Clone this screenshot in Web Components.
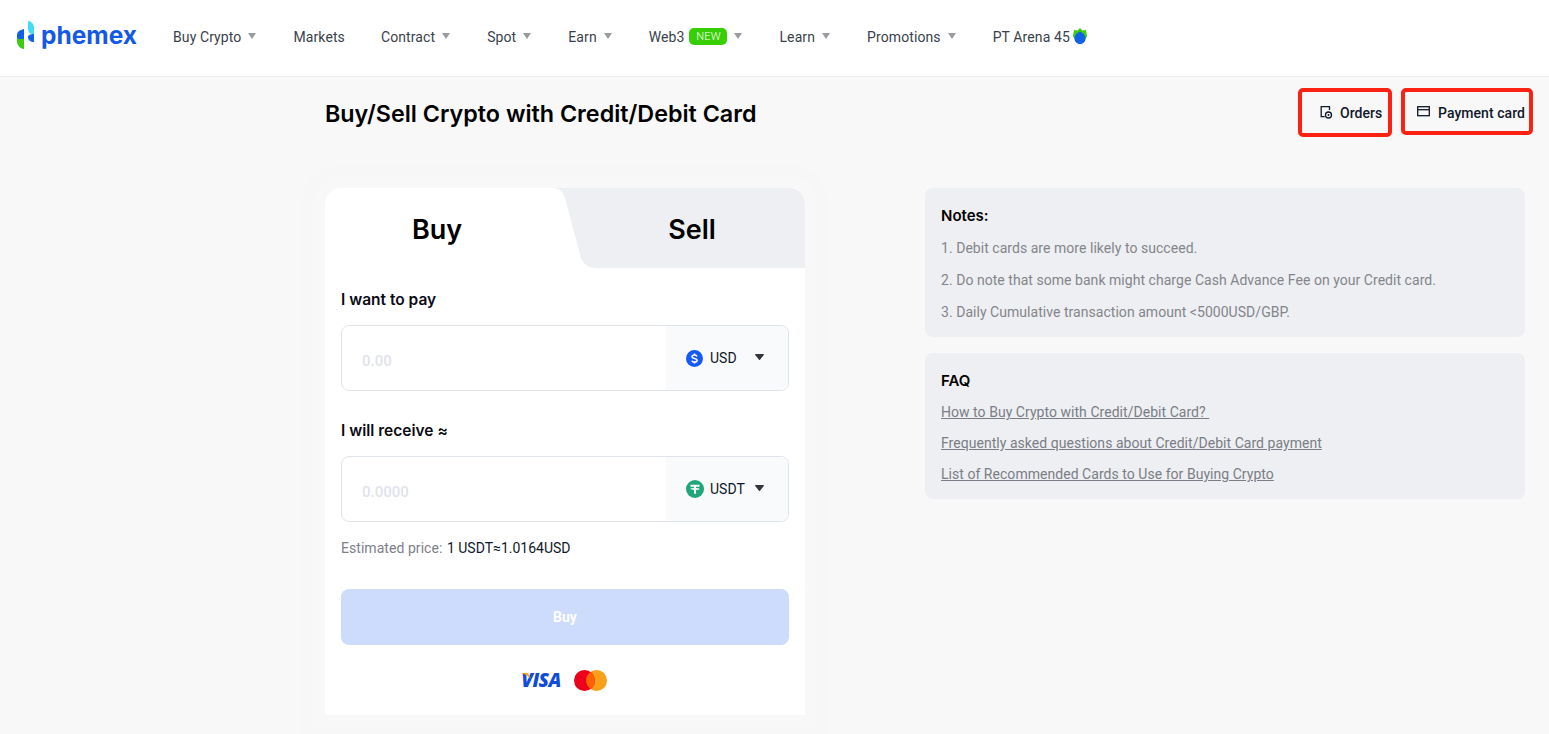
<!DOCTYPE html>
<html>
<head>
<meta charset="utf-8">
<title>Buy/Sell Crypto</title>
<style>
  html, body { margin: 0; padding: 0; }
  body { background: #f8f8f8; font-family: Roboto, "Liberation Sans", sans-serif; height: 734px; overflow: hidden; }
</style>
</head>
<body>
<site-header></site-header>
<page-main>
  <page-title slot="title">Buy/Sell Crypto with Credit/Debit Card</page-title>
  <trade-card slot="left"></trade-card>
  <info-panel slot="right" heading="Notes:">
    <p>1. Debit cards are more likely to succeed.</p>
    <p>2. Do note that some bank might charge Cash Advance Fee on your Credit card.</p>
    <p>3. Daily Cumulative transaction amount &lt;5000USD/GBP.</p>
  </info-panel>
  <info-panel slot="right" heading="FAQ" links>
    <a href="#">How to Buy Crypto with Credit/Debit Card?&nbsp;</a>
    <a href="#">Frequently asked questions about Credit/Debit Card payment</a>
    <a href="#">List of Recommended Cards to Use for Buying Crypto</a>
  </info-panel>
</page-main>

<script>
class SiteHeader extends HTMLElement {
  connectedCallback() {
    this.attachShadow({ mode: 'open' });
    const caret = '<svg class="caret" width="10" height="6" viewBox="0 0 10 6"><path d="M1 0h8L5 6z" fill="#999ba0"/></svg>';
    this.shadowRoot.innerHTML = `
      <style>
        :host {
          display: flex;
          align-items: center;
          height: 76px;
          background: #fff;
          border-bottom: 1px solid #efefef;
          padding-left: 17px;
          font: 14px Roboto, sans-serif;
          letter-spacing: 0.1px;
          color: #3a3f4c;
        }
        .logo { display: flex; align-items: center; width: 156px; margin-top: -6px; }
        .logo svg { display: block; }
        .logo span {
          font: 700 24.500px/28px Inter, sans-serif;
          color: #1359e6;
          margin-left: 7px;
          letter-spacing: 0;
        }
        nav { display: flex; align-items: center; gap: 36px; margin-top: -2px; }
        nav a { display: flex; align-items: center; color: inherit; text-decoration: none; white-space: nowrap; }
        .caret { margin-left: 6px; margin-top: -3px; }
        .new {
          background: #37ce04;
          color: #fff;
          font-size: 11px;
          font-weight: 300;
          line-height: 17px;
          width: 38px;
          text-align: center;
          border-radius: 5px;
          margin-left: 5px;
          margin-top: -1px;
        }
        .shield { margin-left: 3px; margin-top: -2px; }
      </style>
      <div class="logo">
        <svg width="17" height="28" viewBox="0 0 17 28">
          <path d="M7 8C2.500 9 0 11 0 14v3c0 1 1 1 2 1h5z" fill="#1160e8"/>
          <path d="M0 18h7v10C3 28 0 24 0 20z" fill="#3ccb0e"/>
          <path d="M11 0c3.500 0 6 3 6 7v6h-1c-3 0-5-2-5-5z" fill="#43dcf5"/>
          <path d="M17 13v8c-3.500 0-6-2-6-5 0-2 2.500-3 6-3z" fill="#1160e8"/>
        </svg>
        <span>phemex</span>
      </div>
      <nav>
        <a href="#">Buy Crypto${caret}</a>
        <a href="#">Markets</a>
        <a href="#">Contract${caret}</a>
        <a href="#">Spot${caret}</a>
        <a href="#">Earn${caret}</a>
        <a href="#">Web3<span class="new">NEW</span>${caret}</a>
        <a href="#">Learn${caret}</a>
        <a href="#">Promotions${caret}</a>
        <a href="#">PT Arena 45
          <svg class="shield" width="14" height="16" viewBox="0 0 14 16">
            <path d="M7 0l2.500 2.500L13 2l1 6-2 4H2L0 8l1-6 3.500.5z" fill="#3ccb0e"/>
            <path d="M7 3.500c3 1.500 5.500 3.500 5.500 7a5.500 5.500 0 0 1-11 0c0-3.500 2.500-5.500 5.500-7z" fill="#1160e8"/>
          </svg>
        </a>
      </nav>
    `;
  }
}
customElements.define('site-header', SiteHeader);

class PageMain extends HTMLElement {
  connectedCallback() {
    this.attachShadow({ mode: 'open' });
    this.shadowRoot.innerHTML = `
      <style>
        :host { display: block; padding: 11px 24px 0 325px; }
        .top { display: flex; align-items: center; justify-content: space-between; height: 50px; margin-bottom: 50px; }
        .actions { display: flex; align-items: flex-start; gap: 9px; margin-right: -8px; align-self: flex-start; }
        .columns { display: flex; justify-content: space-between; align-items: flex-start; }
        .right { width: 600px; display: flex; flex-direction: column; gap: 16px; }
      </style>
      <div class="top">
        <slot name="title"></slot>
        <div class="actions">
          <marked-action label="Orders" icon="orders"></marked-action>
          <marked-action label="Payment card" icon="card"></marked-action>
        </div>
      </div>
      <div class="columns">
        <slot name="left"></slot>
        <div class="right"><slot name="right"></slot></div>
      </div>
    `;
  }
}
customElements.define('page-main', PageMain);

class PageTitle extends HTMLElement {
  connectedCallback() {
    this.attachShadow({ mode: 'open' });
    this.shadowRoot.innerHTML = `
      <style>
        :host { display: block; font: 600 23.300px/30px Inter, sans-serif; color: #000; margin-top: 1px; }
      </style>
      <slot></slot>
    `;
  }
}
customElements.define('page-title', PageTitle);

class MarkedAction extends HTMLElement {
  connectedCallback() {
    this.attachShadow({ mode: 'open' });
    const icons = {
      orders: '<path d="M10.500 5V1.700H2.200v10h3.500" fill="none" stroke="#10182a" stroke-width="1.300"/><circle cx="9.500" cy="10" r="3" fill="none" stroke="#10182a" stroke-width="1.300"/><circle cx="9.500" cy="10" r="1" fill="#10182a"/>',
      card: '<rect x=".7" y="1.700" width="11.600" height="9" fill="none" stroke="#10182a" stroke-width="1.300"/><path d="M1 4.700h11" stroke="#10182a" stroke-width="1.300"/>'
    };
    const name = this.getAttribute('icon');
    const orders = name === 'orders';
    this.shadowRoot.innerHTML = `
      <style>
        :host {
          display: flex;
          align-items: center;
          box-sizing: border-box;
          gap: ${orders ? 7 : 8}px;
          width: ${orders ? 94 : 132}px;
          height: ${orders ? 49 : 47}px;
          border: 4px solid #fc2213;
          border-radius: 5px;
          padding: ${orders ? 0 : 2}px 0 0 ${orders ? 17 : 12}px;
          font: 500 14px Roboto, sans-serif;
          letter-spacing: 0.05px;
          color: #10182a;
          white-space: nowrap;
        }
        svg { display: block; margin-top: -2px; flex: none; }
      </style>
      <svg width="${orders ? 14 : 13}" height="14" viewBox="0 0 ${orders ? 14 : 13} 14">${icons[name]}</svg>
      <span>${this.getAttribute('label')}</span>
    `;
  }
}
customElements.define('marked-action', MarkedAction);

class AmountField extends HTMLElement {
  connectedCallback() {
    this.attachShadow({ mode: 'open' });
    const coin = this.getAttribute('coin');
    const usd = coin === 'USD';
    const icon = usd
      ? `<svg width="17" height="17" viewBox="0 0 17 17"><circle cx="8.500" cy="8.500" r="8.500" fill="#1659f5"/><path d="M11 6.400C10.600 5.500 9.700 5 8.500 5 7.100 5 6 5.700 6 6.700c0 2.300 5.100 1.200 5.100 3.600 0 1.100-1.100 1.800-2.600 1.800-1.300 0-2.300-.5-2.700-1.500M8.500 3.600V5M8.500 12v1.400" fill="none" stroke="#fff" stroke-width="1.600"/></svg>`
      : `<svg width="18" height="18" viewBox="0 0 18 18"><circle cx="9" cy="9" r="9" fill="#1fa67b"/><path d="M4.500 4.800h9v1.900h-3.500v1.200c2 .1 3.700.5 3.700 1s-1.700.9-3.700 1v3.800H8v-3.800c-2-.1-3.700-.5-3.700-1s1.700-.9 3.700-1V6.700H4.500z" fill="#fff"/></svg>`;
    this.shadowRoot.innerHTML = `
      <style>
        :host { display: block; }
        label { display: block; font: 600 15.500px/20px Inter, sans-serif; color: #0a0a14; margin-bottom: 15px; }
        .box {
          display: flex;
          height: 64px;
          border: 1px solid #dfe3ec;
          border-radius: 8px;
          overflow: hidden;
          background: #fff;
        }
        .value { flex: 1; display: flex; align-items: center; padding: 6px 0 0 20px; font: 500 15px Roboto, sans-serif; color: #dfe3ec; }
        .coin {
          width: 122px;
          box-sizing: border-box;
          padding-left: 20px;
          background: #f9fafc;
          display: flex;
          align-items: center;
          font: 14px Roboto, sans-serif;
          color: #10182a;
        }
        .coin svg:first-child { margin-right: ${usd ? 7 : 6}px; flex: none; }
        .coin span { flex: 1; }
        .arrow { margin: -2px 24px 0 0; flex: none; }
      </style>
      <label>${this.getAttribute('label')}</label>
      <div class="box">
        <div class="value">${this.getAttribute('placeholder')}</div>
        <div class="coin">
          ${icon}
          <span>${coin}</span>
          <svg class="arrow" width="9" height="6" viewBox="0 0 9 6"><path d="M.6 0h7.800c.5 0 .7.500.4.900L5 5.700c-.3.400-.7.400-1 0L.2.900C-.1.500.1 0 .6 0z" fill="#33363d"/></svg>
        </div>
      </div>
    `;
  }
}
customElements.define('amount-field', AmountField);

class TradeCard extends HTMLElement {
  connectedCallback() {
    this.attachShadow({ mode: 'open' });
    this.shadowRoot.innerHTML = `
      <style>
        :host {
          display: block;
          width: 480px;
          height: 527px;
          background: #fff;
          border-radius: 16px 16px 0 0;
          box-shadow: 0 0 0 12px #f8f8f8, 0 0 0 23px #f7f7f7;
        }
        .tabs {
          position: relative;
          display: grid;
          grid-template-columns: 224px 1fr;
          column-gap: 30px;
          height: 80px;
          font: 600 27px/84px Inter, sans-serif;
          color: #000;
          text-align: center;
        }
        .tabs svg { position: absolute; left: 0; top: 0; }
        .tabs div { position: relative; }
        form { display: block; padding: 22px 16px 0; }
        amount-field + amount-field { margin-top: 30px; }
        .price { margin-top: 16px; font: 14px/20px Roboto, sans-serif; letter-spacing: 0.05px; color: #7d8088; }
        .price b { font-weight: 400; color: #10182a; margin-left: 1px; letter-spacing: 0; }
        .buy {
          margin-top: 31px;
          height: 56px;
          border-radius: 8px;
          background: #cddbfd;
          color: #fff;
          font: 700 14px/56px Roboto, sans-serif;
          text-align: center;
        }
        .brands { display: flex; justify-content: center; align-items: center; gap: 13px; margin-top: 24px; padding-right: 2px; }
        .visa { font: italic 800 19px/22px "Open Sans", sans-serif; color: #0f4cd8; letter-spacing: -0.6px; position: relative; width: 40px; text-align: center; }
        .visa svg { position: absolute; left: 0; top: 4px; }
      </style>
      <div class="tabs">
        <svg width="480" height="80" viewBox="0 0 480 80">
          <path d="M228 0c6 0 10 4 12 10l16 60c2 6 8 10 15 10h209V16c0-9-7-16-16-16z" fill="#eeeff2"/>
        </svg>
        <div>Buy</div>
        <div>Sell</div>
      </div>
      <form>
        <amount-field label="I want to pay" placeholder="0.00" coin="USD"></amount-field>
        <amount-field label="I will receive ≈" placeholder="0.0000" coin="USDT"></amount-field>
        <div class="price">Estimated price: <b>1 USDT≈1.0164USD</b></div>
        <div class="buy">Buy</div>
        <div class="brands">
          <div class="visa">VISA<svg width="10" height="6" viewBox="0 0 10 6"><path d="M0 0h7l3 6C7 3 4 1 0 0z" fill="#f5a623"/></svg></div>
          <svg width="33" height="21" viewBox="0 0 33 21">
            <circle cx="22.500" cy="10.500" r="10.500" fill="#f9a01b"/>
            <circle cx="10.500" cy="10.500" r="10.500" fill="#ec001b"/>
            <path d="M16.500 1.900a10.500 10.500 0 0 1 0 17.200 10.500 10.500 0 0 1 0-17.200z" fill="#ff6000"/>
          </svg>
        </div>
      </form>
    `;
  }
}
customElements.define('trade-card', TradeCard);

class InfoPanel extends HTMLElement {
  connectedCallback() {
    this.attachShadow({ mode: 'open' });
    this.shadowRoot.innerHTML = `
      <style>
        :host {
          display: block;
          background: #eeeff2;
          border-radius: 8px;
          padding: 18px 16px 9px;
          color: #83858b;
          font: 14px Roboto, sans-serif;
          letter-spacing: 0.04px;
        }
        h3 { margin: 0 0 6px; font: 600 15px/20px Inter, sans-serif; letter-spacing: 0; color: #000; }
        ::slotted(p) { margin: 0; line-height: 32px; }
        ::slotted(a) { display: block; line-height: 31px; color: #7a7d85; text-decoration: underline; }
      </style>
      <h3>${this.getAttribute('heading')}</h3>
      <slot></slot>
    `;
  }
}
customElements.define('info-panel', InfoPanel);
</script>
</body>
</html>
